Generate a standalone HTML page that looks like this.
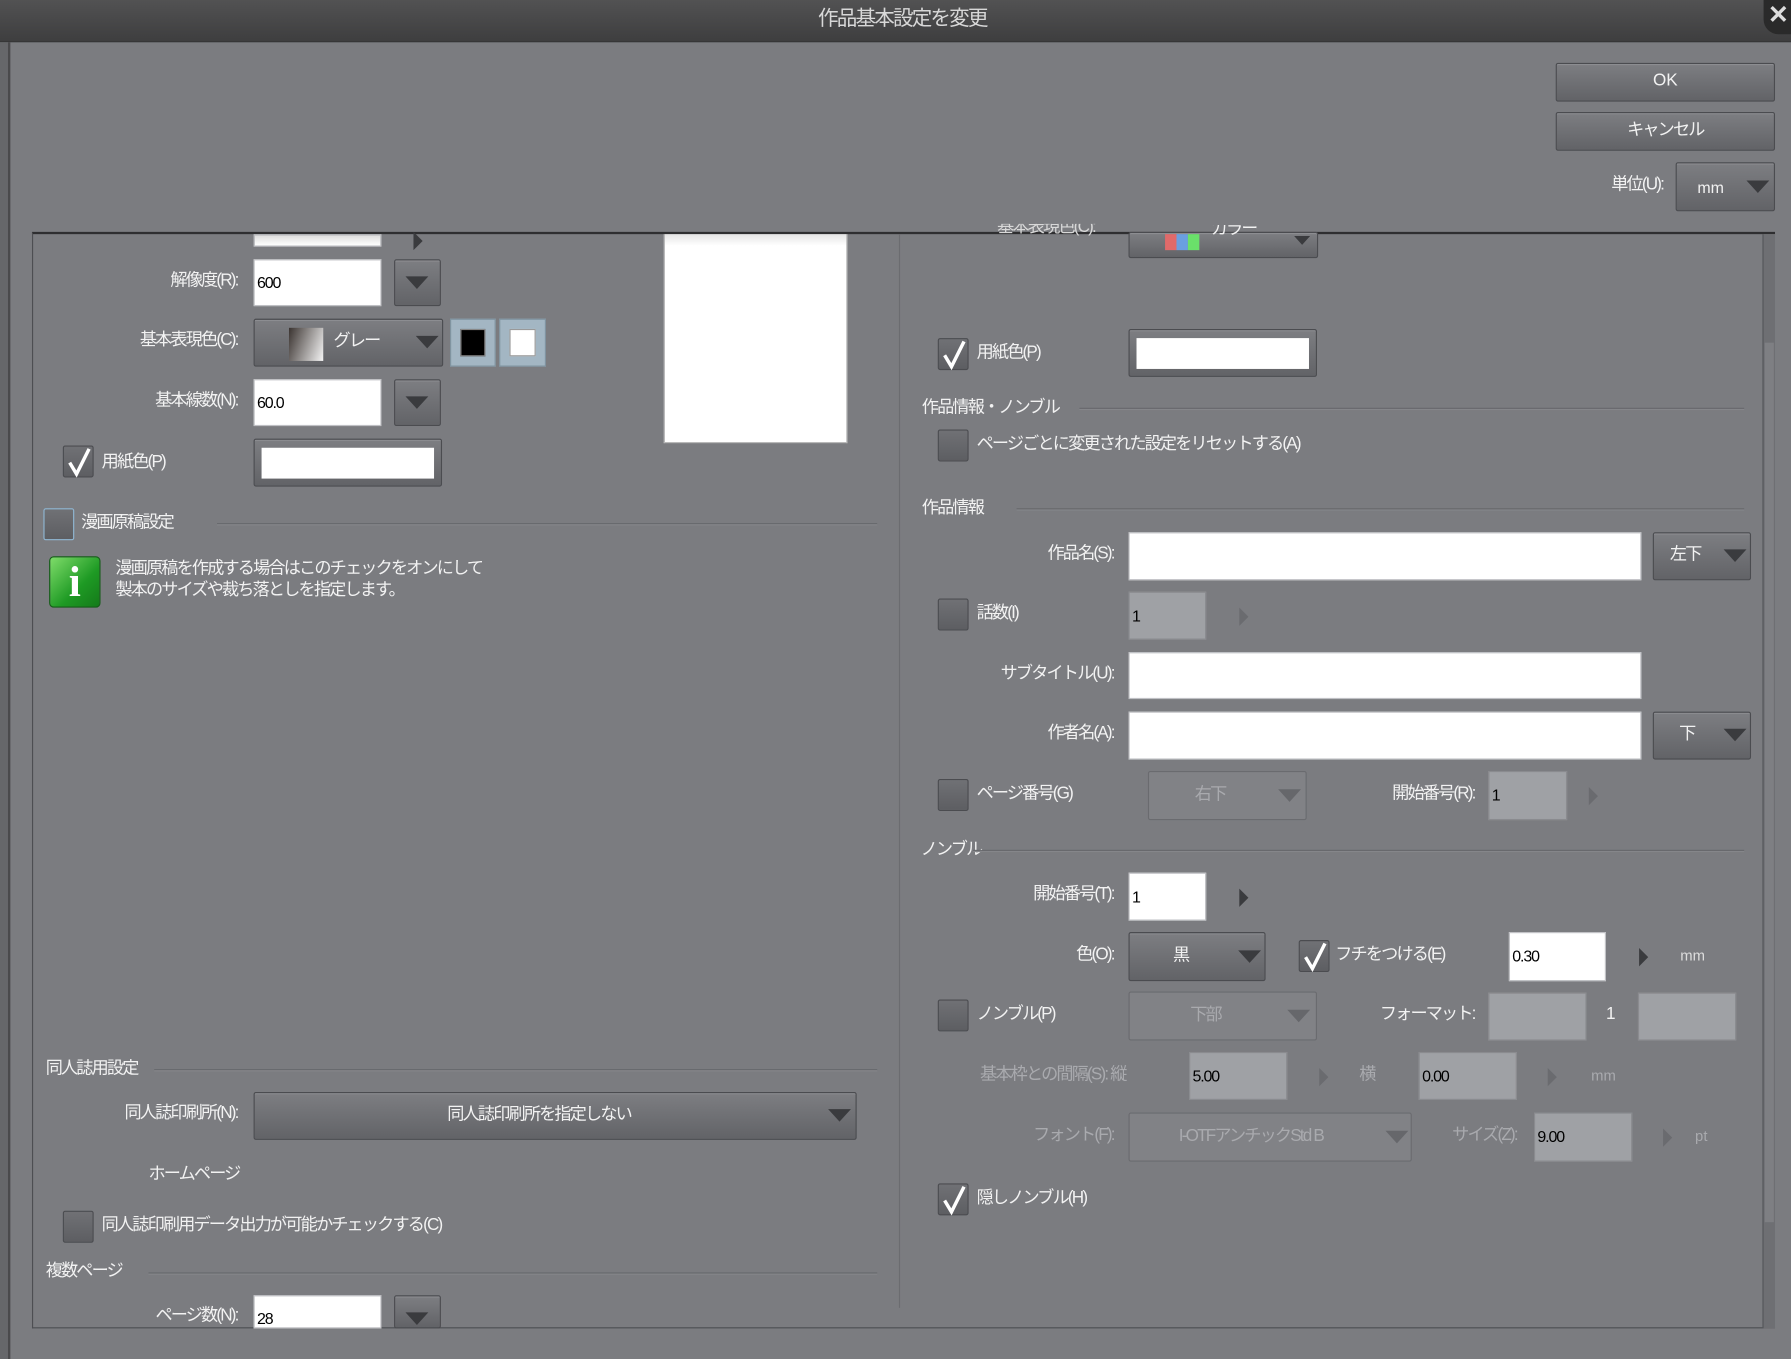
<!DOCTYPE html>
<html><head><meta charset="utf-8">
<style>
*{margin:0;padding:0;box-sizing:border-box}
html,body{width:1791px;height:1359px;overflow:hidden;background:#7b7c80}
#w{position:absolute;left:0;top:0;width:1568px;height:1190px;transform:scale(1.14222);transform-origin:0 0;background:#7b7c80;font-family:"Liberation Sans","Noto Sans CJK JP",sans-serif;font-size:15px;color:#f2f2f2}
#w div{position:absolute}
.t{white-space:nowrap;line-height:18px;letter-spacing:-1.6px}
.r{text-align:right}
.dis{color:#a9aaae}
.in{background:#fff;border:1px solid #bfc0c4;color:#000;font-size:14px;padding:0 2px;line-height:40px;letter-spacing:-1px}
.din{background:#9fa1a5;border:1px solid #8a8b8f;color:#000;font-size:14px;padding:0 2px;line-height:40px;letter-spacing:-1px}
.btn{background:linear-gradient(#7d7e82,#626367);border:1px solid #4b4c50;border-radius:2px;box-shadow:inset 0 1px 0 #8c8d91}
.dbtn{background:#818286;border:1px solid #6a6b6f;border-radius:2px}
.ar{width:0;height:0;border-left:10px solid transparent;border-right:10px solid transparent;border-top:11px solid #3a3b3e}
.dar{width:0;height:0;border-left:10px solid transparent;border-right:10px solid transparent;border-top:11px solid #66676b}
.tri{width:0;height:0;border-top:8px solid transparent;border-bottom:8px solid transparent;border-left:8px solid #3a3b3e}
.dtri{width:0;height:0;border-top:8px solid transparent;border-bottom:8px solid transparent;border-left:8px solid #6a6b6f}
.cb{width:27px;height:28px;background:linear-gradient(#707175,#5d5e62);border:1px solid #4b4c50;border-radius:2px}
.sep{height:2px;border-top:1px solid #66676b;border-bottom:1px solid #85868a}
</style></head><body><div id="w">
<div style="left:0;top:0;width:1568px;height:37px;background:linear-gradient(#525253,#3e3e3f);border-bottom:1px solid #2f2f30"></div>
<div class="t" style="left:0;top:7px;width:1580px;text-align:center;font-size:18px;color:#d8d8d8">作品基本設定を変更</div>
<div style="left:1544px;top:0;width:26px;height:30px;border-radius:0 0 0 13px;background:#2a2a2a;color:#ddd;font-size:22px;font-weight:bold;line-height:26px;text-align:center">✕</div>
<div style="left:0;top:37px;width:9px;height:1153px;background:#66676a;border-right:2px solid #4a4a4c"></div>
<div class="btn" style="left:1362px;top:55px;width:192px;height:34px"></div>
<div class="t" style="left:1362px;top:62px;width:192px;text-align:center;letter-spacing:0">OK</div>
<div class="btn" style="left:1362px;top:98px;width:192px;height:34px"></div>
<div class="t" style="left:1362px;top:105px;width:192px;text-align:center">キャンセル</div>
<div class="t r" style="left:1360px;top:153px;width:96px">単位(U):</div>
<div class="btn" style="left:1467px;top:142px;width:87px;height:43px"></div>
<div class="t" style="left:1486px;top:155px;font-size:14px;letter-spacing:0">mm</div>
<div class="ar" style="left:1529px;top:158px"></div>
<div style="left:28px;top:203px;width:1526px;height:960px;border-top:2px solid #2e2e30;border-left:1px solid #4d4e52;border-bottom:1px solid #4d4e52;overflow:hidden"></div>
<div style="left:787px;top:205px;width:1px;height:940px;background:#6b6c70"></div>
<div style="left:1543px;top:205px;width:11px;height:958px;background:#6e6f73;border-left:1px solid #55565a"></div>
<div style="left:1545px;top:300px;width:8px;height:770px;background:#7e7f83"></div>
<!-- left column -->
<div class="in" style="left:222px;top:205px;width:112px;height:11px;background:linear-gradient(#ddd,#fff)"></div>
<div class="tri" style="left:362px;top:203px"></div>
<div class="t r" style="left:60px;top:237px;width:148px">解像度(R):</div>
<div class="in" style="left:222px;top:227px;width:112px;height:41px;line-height:38px">600</div>
<div class="btn" style="left:345px;top:227px;width:41px;height:41px"></div><div class="ar" style="left:355px;top:242px"></div>
<div class="t r" style="left:60px;top:289px;width:148px">基本表現色(C):</div>
<div class="btn" style="left:222px;top:279px;width:166px;height:42px"></div>
<div style="left:253px;top:287px;width:30px;height:29px;background:linear-gradient(110deg,#3a3330,#f4f4f4)"></div>
<div class="t" style="left:292px;top:290px">グレー</div>
<div class="ar" style="left:364px;top:294px"></div>
<div style="left:394px;top:279px;width:40px;height:42px;background:#a3b6c3;border:1px solid #7f939f"></div>
<div style="left:403px;top:288px;width:22px;height:24px;background:#000;border:1px solid #888"></div>
<div style="left:437px;top:279px;width:41px;height:42px;background:#a3b6c3;border:1px solid #7f939f"></div>
<div style="left:446px;top:288px;width:23px;height:24px;background:#fff;border:1px solid #999"></div>
<div class="t r" style="left:60px;top:342px;width:148px">基本線数(N):</div>
<div class="in" style="left:222px;top:332px;width:112px;height:41px;line-height:38px">60.0</div>
<div class="btn" style="left:345px;top:332px;width:41px;height:41px"></div><div class="ar" style="left:355px;top:347px"></div>
<div class="cb" style="left:55px;top:390px"><svg width="27" height="28" style="position:absolute;left:0;top:0"><path d="M5 14 L11 24 L22 2" stroke="#fff" stroke-width="3" fill="none"/></svg></div>
<div class="t" style="left:89px;top:396px">用紙色(P)</div>
<div class="btn" style="left:222px;top:384px;width:165px;height:42px"></div>
<div style="left:229px;top:392px;width:151px;height:27px;background:#fff"></div>
<div style="left:581px;top:205px;width:161px;height:183px;background:linear-gradient(#e4e4e4,#fff 10px);border:1px solid #bbb;border-top:none"></div>
<div class="cb" style="left:38px;top:445px;border-color:#8fb6d2"></div>
<div class="t" style="left:71px;top:449px">漫画原稿設定</div>
<div class="sep" style="left:190px;top:458px;width:578px"></div>
<div style="left:43px;top:487px;width:45px;height:45px;border-radius:4px;background:linear-gradient(135deg,#7fdc6a,#1e9a24 60%,#157a1a);border:1px solid #155e18"></div>
<div class="t" style="left:43px;top:488px;width:45px;text-align:center;font-family:'Liberation Serif',serif;font-weight:bold;font-size:38px;line-height:44px;color:#fff;letter-spacing:0">i</div>
<div class="t" style="left:101px;top:489px">漫画原稿を作成する場合はこのチェックをオンにして</div>
<div class="t" style="left:101px;top:508px">製本のサイズや裁ち落としを指定します。</div>
<div class="t" style="left:40px;top:927px">同人誌用設定</div>
<div class="sep" style="left:135px;top:936px;width:633px"></div>
<div class="t r" style="left:40px;top:966px;width:168px">同人誌印刷所(N):</div>
<div class="btn" style="left:222px;top:956px;width:528px;height:42px"></div>
<div class="t" style="left:222px;top:967px;width:500px;text-align:center">同人誌印刷所を指定しない</div>
<div class="ar" style="left:725px;top:971px"></div>
<div class="t" style="left:130px;top:1019px">ホームページ</div>
<div class="cb" style="left:55px;top:1060px"></div>
<div class="t" style="left:89px;top:1064px">同人誌印刷用データ出力が可能かチェックする(C)</div>
<div class="t" style="left:40px;top:1104px">複数ページ</div>
<div class="sep" style="left:130px;top:1114px;width:638px"></div>
<div class="t r" style="left:60px;top:1143px;width:148px">ページ数(N):</div>
<div class="in" style="left:222px;top:1134px;width:112px;height:29px;line-height:38px">28</div>
<div class="btn" style="left:345px;top:1134px;width:41px;height:29px"></div><div class="ar" style="left:355px;top:1149px"></div>
<!-- right column -->
<div class="t" style="left:873px;top:196px;color:#d8d8d8;overflow:hidden;height:11px;line-height:5px">基本表現色(C):</div>
<div class="btn" style="left:988px;top:203px;width:166px;height:23px"></div>
<div style="left:1020px;top:205px;width:10px;height:14px;background:#e06a6a"></div>
<div style="left:1030px;top:205px;width:10px;height:14px;background:#6a9fe0"></div>
<div style="left:1040px;top:205px;width:10px;height:14px;background:#6ae06a"></div>
<div class="t" style="left:1060px;top:197px;overflow:hidden;height:12px;line-height:8px">カラー</div>
<div class="ar" style="left:1130px;top:205px;transform:scale(.7)"></div>
<div class="cb" style="left:821px;top:296px"><svg width="27" height="28" style="position:absolute;left:0;top:0"><path d="M5 14 L11 24 L22 2" stroke="#fff" stroke-width="3" fill="none"/></svg></div>
<div class="t" style="left:855px;top:300px">用紙色(P)</div>
<div class="btn" style="left:988px;top:288px;width:165px;height:42px"></div>
<div style="left:995px;top:296px;width:151px;height:27px;background:#fff"></div>
<div class="t" style="left:807px;top:348px">作品情報・ノンブル</div>
<div class="sep" style="left:945px;top:357px;width:582px"></div>
<div class="cb" style="left:821px;top:376px"></div>
<div class="t" style="left:855px;top:380px">ページごとに変更された設定をリセットする(A)</div>
<div class="t" style="left:807px;top:436px">作品情報</div>
<div class="sep" style="left:890px;top:445px;width:637px"></div>
<div class="t r" style="left:820px;top:476px;width:155px">作品名(S):</div>
<div class="in" style="left:988px;top:466px;width:449px;height:42px"></div>
<div class="btn" style="left:1447px;top:466px;width:86px;height:42px"></div>
<div class="t" style="left:1462px;top:477px">左下</div><div class="ar" style="left:1509px;top:481px"></div>
<div class="cb" style="left:821px;top:524px"></div>
<div class="t" style="left:855px;top:528px">話数(I)</div>
<div class="din" style="left:988px;top:518px;width:68px;height:42px">1</div>
<div class="dtri" style="left:1085px;top:532px"></div>
<div class="t r" style="left:820px;top:581px;width:155px">サブタイトル(U):</div>
<div class="in" style="left:988px;top:571px;width:449px;height:41px"></div>
<div class="t r" style="left:820px;top:633px;width:155px">作者名(A):</div>
<div class="in" style="left:988px;top:623px;width:449px;height:42px"></div>
<div class="btn" style="left:1447px;top:623px;width:86px;height:42px"></div>
<div class="t" style="left:1470px;top:634px">下</div><div class="ar" style="left:1509px;top:638px"></div>
<div class="cb" style="left:821px;top:682px"></div>
<div class="t" style="left:855px;top:686px">ページ番号(G)</div>
<div class="dbtn" style="left:1005px;top:675px;width:139px;height:43px"></div>
<div class="t dis" style="left:1046px;top:687px">右下</div><div class="dar" style="left:1119px;top:691px"></div>
<div class="t r" style="left:1170px;top:686px;width:121px">開始番号(R):</div>
<div class="din" style="left:1303px;top:675px;width:69px;height:43px">1</div>
<div class="dtri" style="left:1391px;top:689px"></div>
<div class="t" style="left:806px;top:735px">ノンブル</div>
<div class="sep" style="left:852px;top:744px;width:675px"></div>
<div class="t r" style="left:820px;top:774px;width:155px">開始番号(T):</div>
<div class="in" style="left:988px;top:764px;width:68px;height:42px">1</div>
<div class="tri" style="left:1085px;top:778px"></div>
<div class="t r" style="left:820px;top:827px;width:155px">色(O):</div>
<div class="btn" style="left:988px;top:816px;width:120px;height:43px"></div>
<div class="t" style="left:1027px;top:828px">黒</div><div class="ar" style="left:1084px;top:832px"></div>
<div class="cb" style="left:1137px;top:823px"><svg width="27" height="28" style="position:absolute;left:0;top:0"><path d="M5 14 L11 24 L22 2" stroke="#fff" stroke-width="3" fill="none"/></svg></div>
<div class="t" style="left:1169px;top:827px">フチをつける(E)</div>
<div class="in" style="left:1321px;top:816px;width:85px;height:43px">0.30</div>
<div class="tri" style="left:1435px;top:830px"></div>
<div class="t" style="left:1471px;top:828px;font-size:13px;color:#ddd;letter-spacing:0">mm</div>
<div class="cb" style="left:821px;top:875px"></div>
<div class="t" style="left:855px;top:879px">ノンブル(P)</div>
<div class="dbtn" style="left:988px;top:868px;width:165px;height:43px"></div>
<div class="t dis" style="left:1042px;top:880px">下部</div><div class="dar" style="left:1127px;top:884px"></div>
<div class="t r" style="left:1170px;top:879px;width:121px">フォーマット:</div>
<div class="din" style="left:1303px;top:869px;width:86px;height:42px"></div>
<div class="t" style="left:1406px;top:879px">1</div>
<div class="din" style="left:1434px;top:869px;width:86px;height:42px"></div>
<div class="t dis" style="left:858px;top:932px">基本枠との間隔(S): 縦</div>
<div class="din" style="left:1041px;top:921px;width:86px;height:42px">5.00</div>
<div class="dtri" style="left:1155px;top:935px"></div>
<div class="t dis" style="left:1190px;top:932px">横</div>
<div class="din" style="left:1242px;top:921px;width:86px;height:42px">0.00</div>
<div class="dtri" style="left:1355px;top:935px"></div>
<div class="t dis" style="left:1393px;top:933px;font-size:13px;letter-spacing:0">mm</div>
<div class="t r dis" style="left:820px;top:985px;width:155px">フォント(F):</div>
<div class="dbtn" style="left:988px;top:974px;width:248px;height:43px"></div>
<div class="t dis" style="left:1032px;top:986px">I-OTFアンチックStd B</div><div class="dar" style="left:1213px;top:990px"></div>
<div class="t r dis" style="left:1230px;top:985px;width:98px">サイズ(Z):</div>
<div class="din" style="left:1343px;top:974px;width:86px;height:43px">9.00</div>
<div class="dtri" style="left:1456px;top:988px"></div>
<div class="t dis" style="left:1484px;top:986px;font-size:13px;letter-spacing:0">pt</div>
<div class="cb" style="left:821px;top:1036px"><svg width="27" height="28" style="position:absolute;left:0;top:0"><path d="M5 14 L11 24 L22 2" stroke="#fff" stroke-width="3" fill="none"/></svg></div>
<div class="t" style="left:855px;top:1040px">隠しノンブル(H)</div>
</div></body></html>
